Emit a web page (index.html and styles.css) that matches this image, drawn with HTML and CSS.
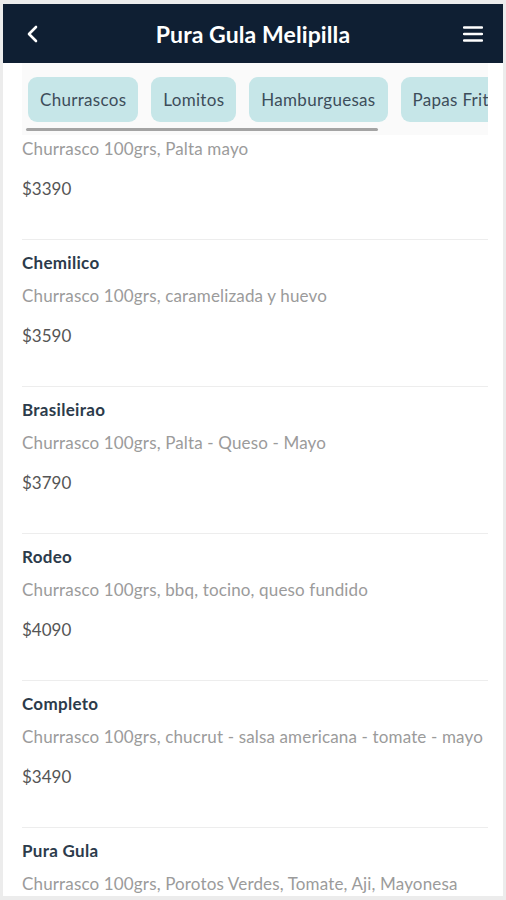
FILE: index.html
```html
<!DOCTYPE html>
<html lang="es">
<head>
    <meta charset="UTF-8">
    <meta name="viewport" content="width=device-width, initial-scale=1.0">
    <title>Pura Gula Melipilla</title>
    <link rel="stylesheet" href="styles.css">
</head>
<body>
    <div class="app">
        <header class="topbar">
            <button class="icon-btn" aria-label="Volver">
                <svg width="14" height="18" viewBox="0 0 14 18">
                    <path d="M10 2 L3 9 L10 16" fill="none" stroke="#fff" stroke-width="2.6" stroke-linecap="round" stroke-linejoin="round"/>
                </svg>
            </button>
            <h1>Pura Gula Melipilla</h1>
            <button class="icon-btn" aria-label="Menú">
                <svg width="20" height="18" viewBox="0 0 20 18">
                    <path d="M1 2.5 H19 M1 9 H19 M1 15.5 H19" stroke="#fff" stroke-width="2.4" stroke-linecap="round"/>
                </svg>
            </button>
        </header>

        <div class="content">
            <nav class="categories">
                <div class="chips">
                    <span class="chip">Churrascos</span>
                    <span class="chip">Lomitos</span>
                    <span class="chip">Hamburguesas</span>
                    <span class="chip">Papas Fritas</span>
                </div>
                <div class="scrollbar"></div>
            </nav>

            <ul class="menu">
                <li class="item partial">
                    <p class="desc">Churrasco 100grs, Palta mayo</p>
                    <p class="price">$3390</p>
                </li>
                <li class="item">
                    <h3>Chemilico</h3>
                    <p class="desc">Churrasco 100grs, caramelizada y huevo</p>
                    <p class="price">$3590</p>
                </li>
                <li class="item">
                    <h3>Brasileirao</h3>
                    <p class="desc">Churrasco 100grs, Palta - Queso - Mayo</p>
                    <p class="price">$3790</p>
                </li>
                <li class="item">
                    <h3>Rodeo</h3>
                    <p class="desc">Churrasco 100grs, bbq, tocino, queso fundido</p>
                    <p class="price">$4090</p>
                </li>
                <li class="item">
                    <h3>Completo</h3>
                    <p class="desc">Churrasco 100grs, chucrut - salsa americana - tomate - mayo</p>
                    <p class="price">$3490</p>
                </li>
                <li class="item">
                    <h3>Pura Gula</h3>
                    <p class="desc">Churrasco 100grs, Porotos Verdes, Tomate, Aji, Mayonesa</p>
                </li>
            </ul>
        </div>
    </div>
</body>
</html>
```

FILE: styles.css
```css
body {
    margin: 0;
    padding: 4px 3px 0 3px;
    background-color: #ececec;
    font-family: Lato, "Open Sans", sans-serif;
    height: 900px;
    box-sizing: border-box;
    overflow: hidden;
}

.app {
    background-color: #fff;
    height: 892px;
    overflow: hidden;
}

.topbar {
    height: 59px;
    background-color: #0f1f33;
    display: flex;
    align-items: center;
    justify-content: space-between;
    padding: 0 18px 0 18px;
}

.topbar h1 {
    margin: 0;
    color: #fff;
    font-size: 23px;
    font-weight: 700;
    letter-spacing: 0.1px;
}

.icon-btn {
    background: none;
    border: none;
    padding: 0;
    width: 24px;
    height: 24px;
    display: flex;
    align-items: center;
    justify-content: center;
    cursor: pointer;
}

.content {
    padding: 0 15px 0 19px;
}

.categories {
    background-color: #fafafa;
    height: 72px;
    overflow: hidden;
}

.chips {
    display: flex;
    gap: 13px;
    padding: 14px 0 0 6px;
    white-space: nowrap;
}

.chip {
    flex: none;
    background-color: #c6e6e8;
    color: #3d4d5a;
    font-size: 17px;
    letter-spacing: 0.3px;
    height: 45px;
    line-height: 45px;
    padding: 0 12px;
    border-radius: 9px;
}

.scrollbar {
    margin: 6px 0 0 4px;
    width: 352px;
    height: 3px;
    background-color: #a4a4a4;
    border-radius: 2px;
}

.menu {
    list-style: none;
    margin: 0;
    padding: 0;
}

.item {
    border-top: 1px solid #ededed;
    padding: 13px 0 40px 0;
}

.item.partial {
    border-top: none;
    padding-top: 4px;
}

.item h3 {
    margin: 0;
    font-size: 17px;
    letter-spacing: 0.3px;
    line-height: 20px;
    font-weight: 700;
    color: #2c3b4b;
}

.item .desc {
    margin: 13px 0 0 0;
    font-size: 17px;
    letter-spacing: 0.15px;
    line-height: 20px;
    color: #9b9b9b;
    white-space: nowrap;
}

.item.partial .desc {
    margin-top: 0;
}

.item .price {
    margin: 20px 0 0 0;
    font-size: 17px;
    line-height: 20px;
    color: #555;
}
```
